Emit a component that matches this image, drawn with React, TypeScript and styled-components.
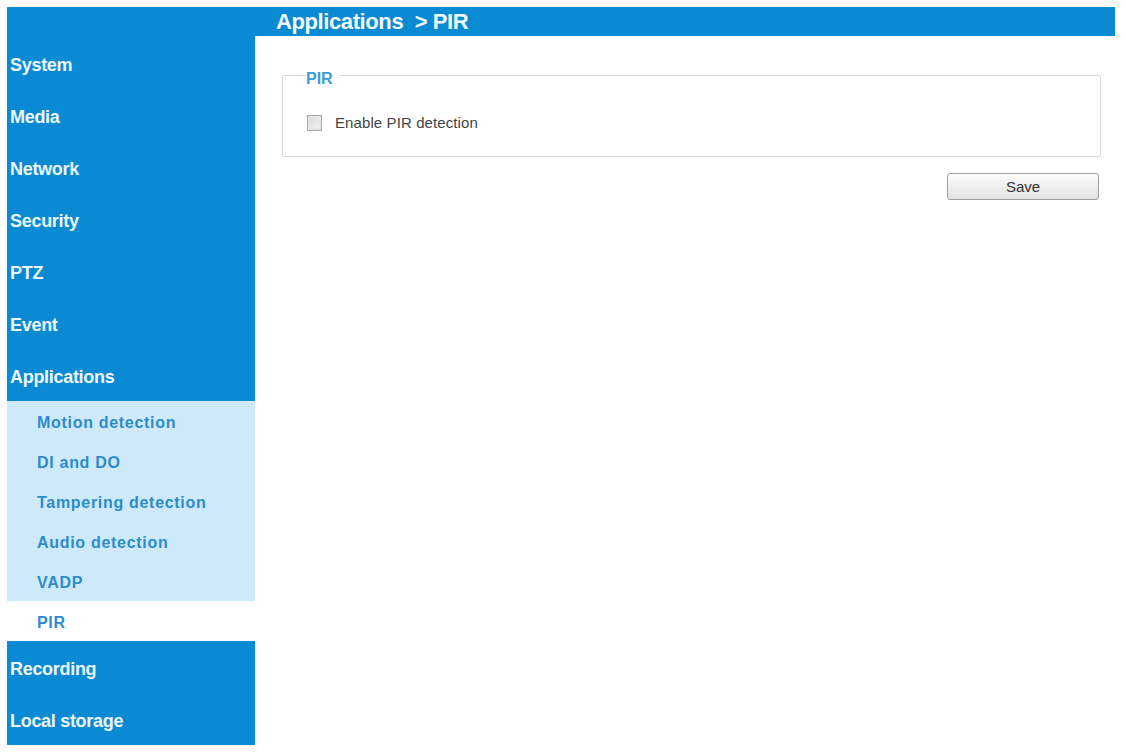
import React from 'react';
import styled, { createGlobalStyle } from 'styled-components';

const GlobalStyle = createGlobalStyle`
  html, body {
    margin: 0;
    padding: 0;
    background: #ffffff;
  }
  body {
    font-family: "Liberation Sans", Arial, Helvetica, sans-serif;
  }
`;

const BLUE = '#0a8ad3';
const LIGHT = '#cde9fa';

const Page = styled.div`
  padding: 7px 11px 7px 7px;
  display: grid;
  grid-template-columns: 248px 1fr;
  grid-template-rows: 29px auto;
`;

const Sidebar = styled.nav`
  grid-column: 1;
  grid-row: 1 / span 2;
  background: ${BLUE};
  padding-top: 30px;
  display: flex;
  flex-direction: column;
  height: 708px;
`;

const TopBar = styled.header`
  grid-column: 2;
  grid-row: 1;
  background: ${BLUE};
  display: flex;
  align-items: center;
  padding-left: 21px;
  color: #f4fbff;
  font-size: 22px;
  font-weight: bold;
  letter-spacing: -0.4px;
  white-space: pre;
`;

const MenuItem = styled.div`
  height: 52px;
  box-sizing: border-box;
  padding: 5px 0 0 3px;
  display: flex;
  align-items: center;
  color: #eef8ff;
  font-size: 18px;
  font-weight: bold;
  letter-spacing: -0.3px;
`;

const SubMenu = styled.div`
  background: ${LIGHT};
  display: flex;
  flex-direction: column;
`;

const SubItem = styled.div<{ $active?: boolean }>`
  height: 40px;
  box-sizing: border-box;
  padding: 3px 0 0 30px;
  display: flex;
  align-items: center;
  color: #2b8bcd;
  font-size: 16px;
  font-weight: bold;
  letter-spacing: 0.7px;
  background: ${(p) => (p.$active ? '#ffffff' : 'transparent')};
`;

const Content = styled.main`
  grid-column: 2;
  grid-row: 2;
  padding: 26px 14px 0 27px;
  display: flex;
  flex-direction: column;
`;

const Group = styled.fieldset`
  margin: 0;
  border: 1px solid #d8d8d8;
  border-radius: 2px;
  padding: 0 24px;
  height: 95px;
  box-sizing: border-box;
`;

const Legend = styled.legend`
  padding: 8px 6px 0 0;
  margin-left: -1px;
  line-height: 18px;
  color: #3e9bdb;
  font-size: 16px;
  font-weight: bold;
`;

const CheckRow = styled.label`
  display: flex;
  align-items: center;
  gap: 13px;
  margin-top: 26px;
  color: #444444;
  font-size: 15px;
  letter-spacing: 0.1px;
`;

const Box = styled.span`
  width: 13px;
  height: 14px;
  border: 1px solid #a9a9a9;
  background: linear-gradient(135deg, #d9d9d9, #f3f3f3);
  box-shadow: inset 0 0 0 2px #e6e6e6;
`;

const Actions = styled.div`
  display: flex;
  justify-content: flex-end;
  padding: 16px 2px 0 0;
`;

const SaveButton = styled.button`
  width: 152px;
  height: 27px;
  border: 1px solid #9d9d9d;
  border-radius: 3px;
  background: linear-gradient(#fbfbfb, #e2e2e2);
  color: #333333;
  font-family: inherit;
  font-size: 15px;
  cursor: pointer;
`;

const mainTop = ['System', 'Media', 'Network', 'Security', 'PTZ', 'Event', 'Applications'];
const subs = ['Motion detection', 'DI and DO', 'Tampering detection', 'Audio detection', 'VADP'];
const mainBottom = ['Recording', 'Local storage'];

export default function App() {
  return (
    <>
      <GlobalStyle />
      <Page>
        <TopBar>Applications  &gt; PIR</TopBar>
        <Sidebar>
          {mainTop.map((m) => (
            <MenuItem key={m}>{m}</MenuItem>
          ))}
          <SubMenu>
            {subs.map((s) => (
              <SubItem key={s}>{s}</SubItem>
            ))}
          </SubMenu>
          <SubItem $active>PIR</SubItem>
          {mainBottom.map((m) => (
            <MenuItem key={m}>{m}</MenuItem>
          ))}
        </Sidebar>
        <Content>
          <Group>
            <Legend>PIR</Legend>
            <CheckRow>
              <Box />
              Enable PIR detection
            </CheckRow>
          </Group>
          <Actions>
            <SaveButton type="button">Save</SaveButton>
          </Actions>
        </Content>
      </Page>
    </>
  );
}
